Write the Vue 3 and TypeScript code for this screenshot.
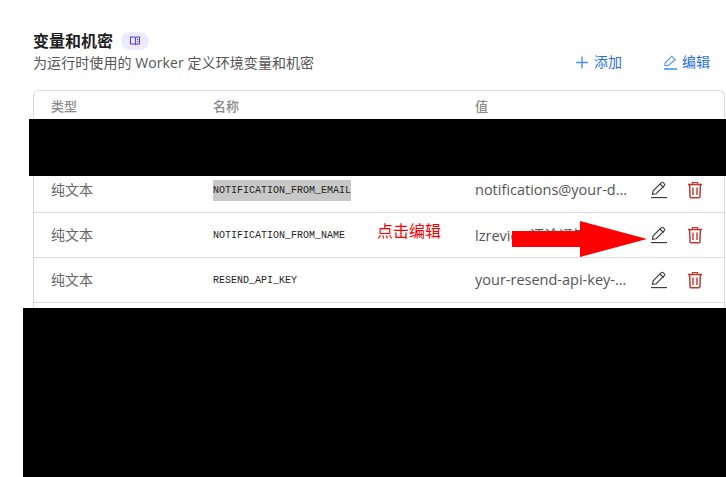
<script setup lang="ts">
const rows = [
  { type: '纯文本', name: 'HIDDEN_VARIABLE', value: 'hidden', selected: false },
  { type: '纯文本', name: 'NOTIFICATION_FROM_EMAIL', value: 'notifications@your-domain.com', selected: true },
  { type: '纯文本', name: 'NOTIFICATION_FROM_NAME', value: 'lzreview评论通知', selected: false },
  { type: '纯文本', name: 'RESEND_API_KEY', value: 'your-resend-api-key-value', selected: false }
]
</script>

<template>
  <div class="page">
    <header class="head">
      <div class="intro">
        <div class="title-line">
          <h2 class="title">变量和机密</h2>
          <span class="badge">
            <svg width="12" height="12" viewBox="0 0 12 12" fill="none" stroke="#5b3fd6" stroke-width="1.1">
              <path d="M1.5 2h4a1 1 0 0 1 1 1v7a1 1 0 0 0-1-1h-4z" />
              <path d="M6.5 3a1 1 0 0 1 1-1h3v7h-3a1 1 0 0 0-1 1" />
              <path d="M8 4.5h1.3M8 6.5h1.3" />
            </svg>
          </span>
        </div>
        <p class="sub">为运行时使用的 Worker 定义环境变量和机密</p>
      </div>
      <div class="actions">
        <button class="link">
          <svg width="12" height="13" viewBox="0 0 12 13" fill="none" stroke="#4a90f5" stroke-width="1.4">
            <path d="M6 0.5v12M0 6.5h12" />
          </svg>
          添加
        </button>
        <button class="link edit">
          <svg width="13" height="15" viewBox="0 0 13 15" fill="none" stroke="#4a90f5" stroke-width="1.1">
            <path d="M1 10.5l0-2.5 6.8-6.8 3.4 3.4-6.8 5.9z" />
            <path d="M0 14h13" stroke-width="1.6" />
          </svg>
          编辑
        </button>
      </div>
    </header>

    <section class="table">
      <div class="row heading">
        <span>类型</span>
        <span>名称</span>
        <span>值</span>
        <span></span>
      </div>
      <div v-for="row in rows" :key="row.name" class="row">
        <span class="type">{{ row.type }}</span>
        <span class="name"><code :class="{ selected: row.selected }">{{ row.name }}</code></span>
        <span class="value">{{ row.value }}</span>
        <span class="tools">
          <svg width="18" height="18" viewBox="0 0 18 18" fill="none" stroke="#3c3c3c" stroke-width="1.15">
            <path d="M2.5 13.2l0.7-3.4 8.1-8.1a1.3 1.3 0 0 1 1.9 0l1.1 1.1a1.3 1.3 0 0 1 0 1.9l-8.1 8z" />
            <path d="M10 3l3.6 3.6" />
            <path d="M1 16.6h16" />
          </svg>
          <svg width="16" height="18" viewBox="0 0 16 18" fill="none" stroke="#c0392f" stroke-width="1.2">
            <path d="M1 3.5h14" stroke-width="1.6" />
            <path d="M5.5 3.5v-2h5v2" />
            <path d="M2.6 3.5l0.5 12.2a1 1 0 0 0 1 1h7.8a1 1 0 0 0 1-1l0.5-12.2" stroke-width="1.5" />
            <path d="M6 6.5v7.5M10 6.5v7.5" stroke-width="1.4" />
          </svg>
        </span>
      </div>
      <div class="row tail"></div>
    </section>

    <div class="redact top"></div>
    <div class="redact bottom"></div>

    <span class="note">点击编辑</span>
    <svg class="arrow" width="136" height="36" viewBox="0 0 136 36">
      <path d="M0 10h68V0l67 18-67 18V26H0z" fill="#ff0000" />
    </svg>
  </div>
</template>

<style scoped>
.page {
  position: relative;
  width: 726px;
  height: 477px;
  overflow: hidden;
  background: #fff;
  box-sizing: border-box;
  padding: 31px 1px 0 33px;
  font-family: "Open Sans", "Noto Sans CJK SC", sans-serif;
  color: #333;
}
.head {
  display: flex;
  justify-content: space-between;
  align-items: flex-start;
  height: 59px;
}
.title-line {
  display: flex;
  align-items: center;
  gap: 8px;
  height: 20px;
}
.title {
  margin: 0;
  font-size: 16px;
  line-height: 20px;
  font-weight: 700;
  color: #1f1f1f;
}
.badge {
  display: flex;
  align-items: center;
  justify-content: center;
  width: 28px;
  height: 18px;
  border-radius: 9px;
  background: #eeeafd;
}
.sub {
  margin: 2px 0 0;
  font-size: 14px;
  line-height: 20px;
  letter-spacing: 0.08px;
  color: #555;
}
.actions {
  display: flex;
  gap: 42px;
  padding-top: 21px;
  padding-right: 15px;
}
.link {
  display: flex;
  align-items: center;
  gap: 6px;
  padding: 0;
  border: 0;
  background: none;
  font: inherit;
  font-size: 14px;
  line-height: 20px;
  color: #1f6fe8;
}
.link.edit {
  gap: 5px;
}
.table {
  border: 1px solid #d9d9d9;
  border-bottom: 0;
  border-radius: 6px 6px 0 0;
}
.row {
  display: grid;
  grid-template-columns: 162px 262px 154px 1fr;
  align-items: center;
  height: 44px;
  padding-left: 17px;
  border-bottom: 1px solid #dcdcdc;
  font-size: 14px;
}
.heading {
  height: 28px;
  padding-bottom: 4px;
  border-bottom: 0;
  font-size: 13px;
  font-weight: 500;
  color: #8a8a8a;
}
.type {
  margin-top: -2px;
  font-size: 14px;
  color: #666;
}
.name {
  margin-top: -1px;
}
.name code {
  display: inline-block;
  font-family: "Liberation Mono", monospace;
  font-size: 10px;
  line-height: 21px;
  color: #222;
}
.name code.selected {
  background: #c8c8c8;
}
.value {
  margin-top: -2px;
  overflow: hidden;
  white-space: nowrap;
  text-overflow: ellipsis;
  font-size: 14.5px;
  color: #555;
}
.tools {
  display: flex;
  align-items: center;
  gap: 19px;
  padding-left: 21px;
}
.tail {
  height: 40px;
}
.redact {
  position: absolute;
  right: 0;
  background: #000;
}
.redact.top {
  left: 29px;
  top: 119px;
  height: 57px;
}
.redact.bottom {
  left: 23px;
  top: 308px;
  bottom: 0;
}
.note {
  position: absolute;
  left: 377px;
  top: 221px;
  font-size: 16px;
  line-height: 20px;
  color: #ff0000;
}
.arrow {
  position: absolute;
  left: 512px;
  top: 221px;
}
</style>
